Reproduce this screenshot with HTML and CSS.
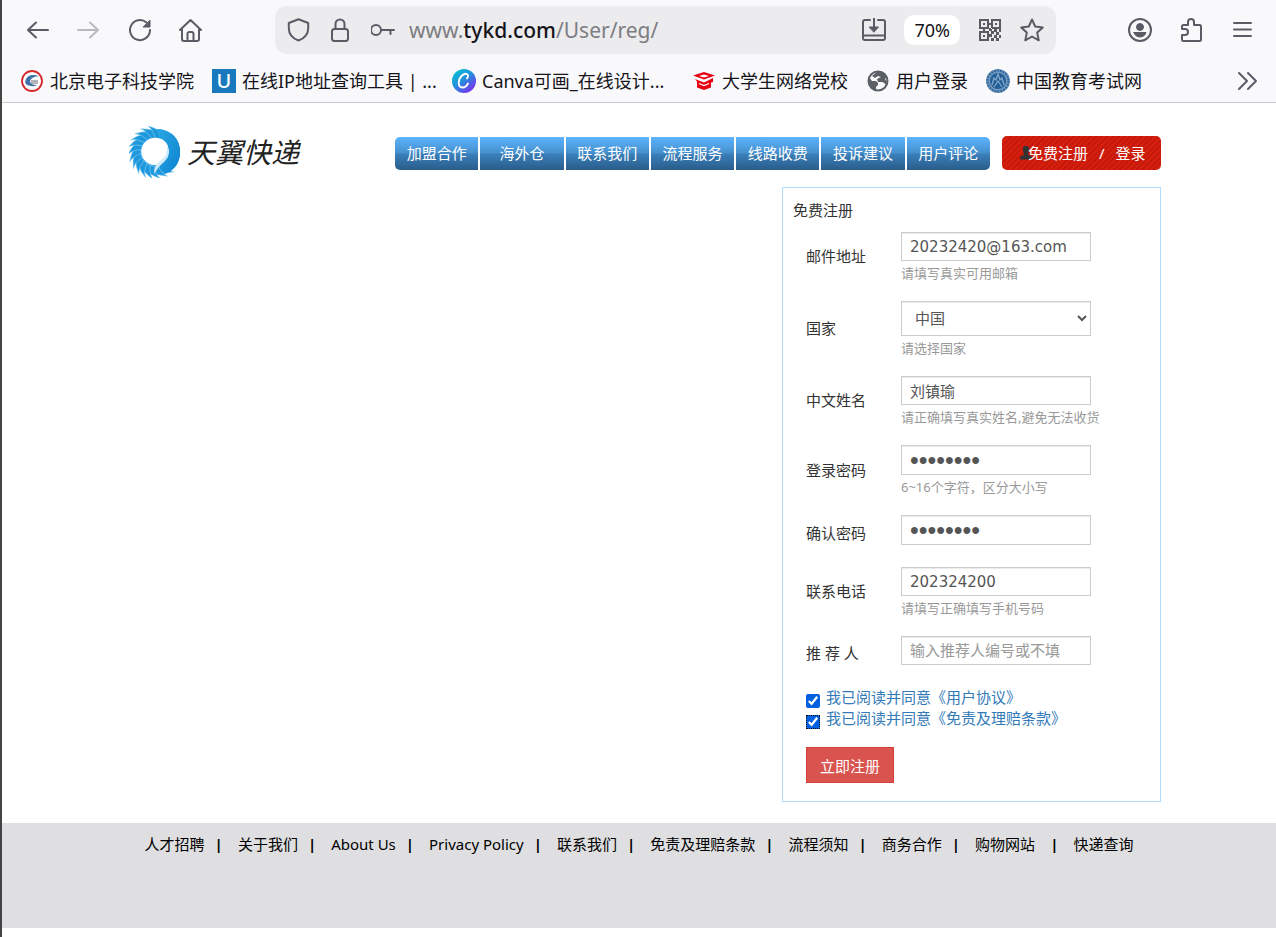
FILE: index.html
```html
<!DOCTYPE html>
<html lang="zh-CN">
<head>
  <meta charset="UTF-8" />
  <meta name="viewport" content="width=device-width, initial-scale=1.0"/>
  <title>天翼快递 - 免费注册</title>
  <link rel="stylesheet" href="styles.css">
</head>
<body>
  <div class="browser">
    <div class="toolbar">
      <div class="tool-group">
        <button class="tool" aria-label="后退"><svg viewBox="0 0 24 24"><path d="M22 12H2M10 4.500L2 12l8 7.500"/></svg></button>
        <button class="tool off" aria-label="前进"><svg viewBox="0 0 24 24"><path d="M1 12h20M13 4.500l8 7.500-8 7.500"/></svg></button>
        <button class="tool" aria-label="刷新"><svg viewBox="0 0 24 24"><path d="M18.500 4.500A10 10 0 1 0 22 12"/><path class="solid thin" d="M22 2.500v6.500h-6.500z"/></svg></button>
        <button class="tool" aria-label="主页"><svg viewBox="0 0 24 24"><path d="M1 12L11.500 2 22 12M3 11v10q0 2 2 2h13q2 0 2-2V11M8.500 22v-6q0-2 2-2h2q2 0 2 2v6"/></svg></button>
      </div>
      <div class="urlbar">
        <svg class="icon" viewBox="0 0 24 24"><path d="M11.500 1.300L1.800 5v5c0 6 4 10.500 9.700 12.500 5.700-2 9.700-6.500 9.700-12.500V5z"/></svg>
        <svg class="icon" viewBox="0 0 24 24"><rect x="3" y="11" width="16" height="12" rx="2.500"/><path d="M6.500 11V6a4.500 4.500 0 0 1 9 0v5"/></svg>
        <svg class="icon" viewBox="0 0 24 24"><circle cx="5" cy="12" r="5"/><path d="M10 12h13M19.500 12v4"/></svg>
        <div class="url">www.<b>tykd.com</b>/User/reg/</div>
        <svg class="icon" viewBox="0 0 24 24"><path d="M8 2H3Q1 2 1 4v16q0 2 2 2h18q2 0 2-2V4q0-2-2-2h-5M1 17.500h22M12 0v12"/><path class="solid thin" d="M7.500 9h9L12 14z"/></svg>
        <button class="zoom">70%</button>
        <svg class="icon qr" viewBox="0 0 24 24"><path class="solid" d="M1 1h10v10H1zM3 3v6h6V3zM5 5h2v2H5zM13 1h10v10H13zM15 3v6h6V3zM17 5h2v2h-2zM1 13h10v10H1zM3 15v6h6v-6zM5 17h2v2H5zM11 5h2v2h-2zM5 11h2v2H5zM11 10h3v3h-3zM16 11h3v3h-3zM21 11h2v3h-2zM13 13h3v3h-3zM18 14h3v3h-3zM11 16h3v3h-3zM16 17h3v3h-3zM21 17h2v3h-2zM13 20h3v3h-3zM18 20h3v3h-3z"/></svg>
        <svg class="icon" viewBox="0 0 24 24"><path d="M12 1.500l3.200 7 7.600.9-5.600 5.200 1.500 7.700-6.700-3.800-6.700 3.800 1.500-7.700L1.200 9.400l7.600-.9z"/></svg>
      </div>
      <div class="tool-group">
        <button class="tool" aria-label="账户"><svg viewBox="0 0 24 24"><circle cx="12" cy="12" r="11"/><circle class="solid thin" cx="12" cy="9" r="3.500"/><path class="solid thin" d="M6 14.500h12q-1.500 4.500-6 4.500t-6-4.500z"/></svg></button>
        <button class="tool" aria-label="扩展"><svg viewBox="0 0 24 24"><path d="M3 11V8.500Q3 7 4.500 7H9V4a3 3 0 0 1 6 0v3h5.500Q22 7 22 8.500v13q0 1.500-1.500 1.500h-16Q3 23 3 21.500V17h3a3 3 0 0 0 0-6z"/></svg></button>
        <button class="tool" aria-label="菜单"><svg viewBox="0 0 24 24"><path d="M4 5h17M4 11.500h17M4 18h17"/></svg></button>
      </div>
    </div>

    <nav class="bookmarks">
      <a href="#">
        <svg viewBox="0 0 24 24"><circle cx="12" cy="12" r="10" fill="#fff" stroke="#d42a2f" stroke-width="1.800"/><path d="M19 7Q9 4 6 10t5 7q3 1 6-1-7 0-7-4 1-4 9-5z" fill="#3f73a8"/><path d="M11 12h7M11 14h7" stroke="#667" stroke-width="1"/></svg>
        <span>北京电子科技学院</span>
      </a>
      <a href="#" class="cut">
        <i class="u-icon">U</i>
        <span>在线IP地址查询工具 | ...</span>
      </a>
      <a href="#" class="cut">
        <svg viewBox="0 0 24 24"><defs><linearGradient id="canva" x1="0" y1="0" x2=".8" y2="1"><stop offset="0" stop-color="#0cc"/><stop offset=".5" stop-color="#2390dc"/><stop offset="1" stop-color="#8128f0"/></linearGradient></defs><circle cx="12" cy="12" r="12" fill="url(#canva)"/><path d="M15 9.500c3-4-1-6.500-5-3s-5 12 .5 12q3.500 0 5.500-4" fill="none" stroke="#fff" stroke-width="1.800" stroke-linecap="round"/></svg>
        <span>Canva可画_在线设计...</span>
      </a>
      <a href="#">
        <svg viewBox="0 0 24 24"><path d="M1 6.500L12 3l11 3.500-11 4z" fill="#e60012"/><path d="M7 7l5-1.500L17 7l-5 1.500z" fill="#fff"/><path d="M3 10l9 3.500L21 9v4l-2 .5v5L12 21l-7-2.500v-6z" fill="#e60012"/><path d="M7 14.500l5 2 5-2" fill="none" stroke="#fff" stroke-width="1.200"/></svg>
        <span>大学生网络党校</span>
      </a>
      <a href="#">
        <svg viewBox="0 0 24 24"><circle cx="12" cy="12" r="9.500" fill="#f9f9fb" stroke="#5b5f66" stroke-width="2"/><path d="M3 8l3 4h4l2 2v2l-2 2v3q-7-2-7-9zM12 2q7 0 9 6l-2 2 2 3-1 3q-2-3-4-3h-4l-1-3 4-2-3-1-3 2-3-2z" fill="#5b5f66"/></svg>
        <span>用户登录</span>
      </a>
      <a href="#">
        <svg viewBox="0 0 24 24"><circle cx="12" cy="12" r="12" fill="#7299bf"/><circle cx="12" cy="12" r="10.500" fill="none" stroke="#2f679c" stroke-width="2" stroke-dasharray="2 1"/><circle cx="12" cy="12" r="8" fill="#245f98"/><path d="M6 16l2-7 2 2 2-6 2 6 2-2 2 7M8 18l4-6 4 6" fill="none" stroke="#86abcd" stroke-width="1.200"/></svg>
        <span>中国教育考试网</span>
      </a>
      <button class="tool more" aria-label="更多书签"><svg viewBox="0 0 24 24"><path d="M4 4l8 8-8 8M13 4l8 8-8 8"/></svg></button>
    </nav>
  </div>

  <div class="container">
    <header>
      <a href="#" class="logo">
        <svg viewBox="0 0 52 52">
          <defs>
            <linearGradient id="ring" x1="0" y1="0" x2="1" y2="1"><stop offset="0" stop-color="#2ba6e4"/><stop offset="1" stop-color="#0b83d0"/></linearGradient>
            <path id="feather" d="M37 12Q31 3 15 1q6 3 9 11z"/>
          </defs>
          <path fill="url(#ring)" fill-rule="evenodd" d="M28 3a23 23 0 1 0 .1 0zM26 11a14 14 0 1 1-.1 0z"/>
          <g fill="#1d98dd" stroke="#9bd6f4" stroke-width=".5">
            <use href="#feather" transform="rotate(-200 26 26)"/>
            <use href="#feather" transform="rotate(-184 26 26)"/>
            <use href="#feather" transform="rotate(-168 26 26)"/>
            <use href="#feather" transform="rotate(-152 26 26)"/>
            <use href="#feather" transform="rotate(-136 26 26)"/>
            <use href="#feather" transform="rotate(-120 26 26)"/>
            <use href="#feather" transform="rotate(-104 26 26)"/>
            <use href="#feather" transform="rotate(-88 26 26)"/>
            <use href="#feather" transform="rotate(-72 26 26)"/>
            <use href="#feather" transform="rotate(-56 26 26)"/>
            <use href="#feather" transform="rotate(-40 26 26)"/>
            <use href="#feather" transform="rotate(-24 26 26)"/>
            <use href="#feather" transform="rotate(-8 26 26)"/>
            <use href="#feather" transform="rotate(8 26 26)"/>
          </g>
          <path fill="url(#ring)" d="M29 3q22 3 22 23 0 16-15 22l-6-9q10-4 10-14 0-10-9-13-3-4-2-9z"/>
          <circle cx="26" cy="25" r="13" fill="#fff"/>
          <path fill="#cfebfa" d="M38 19q5 10-3 17-5 4-10 12 0-9 6-13 8-5 7-16z"/>
        </svg>
        <span>天翼快递</span>
      </a>
      <nav class="menu">
        <a href="#">加盟合作</a>
        <a href="#">海外仓</a>
        <a href="#">联系我们</a>
        <a href="#">流程服务</a>
        <a href="#">线路收费</a>
        <a href="#">投诉建议</a>
        <a href="#">用户评论</a>
      </nav>
      <div class="account">
        <svg viewBox="0 0 12 14"><path d="M6 0C3 0 2.500 2 3 4.500 3.300 6.500 4 7 4 8.500L0 11v2.500h12V11L8 8.500C8 7 8.700 6.500 9 4.500 9.500 2 9 0 6 0z"/></svg>
        <a href="#">免费注册</a><span>/</span><a href="#">登录</a>
      </div>
    </header>

    <main>
      <form class="register">
        <h2>免费注册</h2>
        <div class="row">
          <label for="email">邮件地址</label>
          <div class="field">
            <input type="text" id="email" value="20232420@163.com">
            <p>请填写真实可用邮箱</p>
          </div>
        </div>
        <div class="row">
          <label for="country">国家</label>
          <div class="field">
            <select id="country"><option>中国</option></select>
            <p>请选择国家</p>
          </div>
        </div>
        <div class="row">
          <label for="name">中文姓名</label>
          <div class="field">
            <input type="text" id="name" value="刘镇瑜">
            <p>请正确填写真实姓名,避免无法收货</p>
          </div>
        </div>
        <div class="row">
          <label for="password">登录密码</label>
          <div class="field">
            <input type="password" id="password" value="12345678">
            <p>6~16个字符，区分大小写</p>
          </div>
        </div>
        <div class="row plain">
          <label for="confirm">确认密码</label>
          <div class="field">
            <input type="password" id="confirm" value="12345678">
          </div>
        </div>
        <div class="row">
          <label for="phone">联系电话</label>
          <div class="field">
            <input type="text" id="phone" value="202324200">
            <p>请填写正确填写手机号码</p>
          </div>
        </div>
        <div class="row plain">
          <label for="referrer">推 荐 人</label>
          <div class="field">
            <input type="text" id="referrer" placeholder="输入推荐人编号或不填">
          </div>
        </div>
        <div class="agree">
          <input type="checkbox" id="terms" aria-label="用户协议" checked>
          <a href="#">我已阅读并同意《用户协议》</a>
        </div>
        <div class="agree">
          <input type="checkbox" id="claims" class="focused" aria-label="免责及理赔条款" checked>
          <a href="#">我已阅读并同意《免责及理赔条款》</a>
        </div>
        <button type="submit" class="submit">立即注册</button>
      </form>
    </main>
  </div>

  <footer>
    <a href="#">人才招聘</a>
    <a href="#">关于我们</a>
    <a href="#">About Us</a>
    <a href="#">Privacy Policy</a>
    <a href="#">联系我们</a>
    <a href="#">免责及理赔条款</a>
    <a href="#">流程须知</a>
    <a href="#">商务合作</a>
    <a href="#" class="wide">购物网站</a>
    <a href="#">快递查询</a>
  </footer>
</body>
</html>
```
FILE: styles.css
```css
* {
  box-sizing: border-box;
}
body {
  margin: 0;
  min-height: 100vh;
  border-left: 2px solid #444;
  background-color: #fff;
  color: #333;
  font-family: "Noto Sans", "Noto Sans CJK SC", sans-serif;
  font-size: 15px;
  line-height: 21px;
}
a {
  text-decoration: none;
}
button, input, select {
  font-family: inherit;
}
svg {
  display: block;
  flex: none;
}

/* browser bars */
.browser {
  background-color: #f9f9fb;
  border-bottom: 1px solid #ccc;
}
.toolbar {
  display: flex;
  align-items: center;
  padding: 6px 22px 6px 24px;
}
.tool-group {
  display: flex;
  gap: 27px;
}
.tool {
  width: 24px;
  height: 24px;
  padding: 0;
  border: none;
  background: none;
}
.tool svg, .icon {
  width: 24px;
  height: 24px;
  fill: none;
  stroke: #5b5b66;
  stroke-width: 2;
  stroke-linecap: round;
  stroke-linejoin: round;
}
.tool .solid, .icon .solid {
  fill: #5b5b66;
}
.thin {
  stroke-width: 1;
}
.tool.off {
  opacity: 0.4;
}
.urlbar {
  flex: 1;
  display: flex;
  align-items: center;
  gap: 18px;
  height: 48px;
  margin: 0 72px 0 72px;
  padding: 0 12px;
  border-radius: 12px;
  background-color: #ececee;
}
.url {
  flex: 1;
  margin-left: -4px;
  font-size: 21px;
  line-height: 30px;
  color: #7d7d82;
}
.url b {
  font-weight: 500;
  color: #15141a;
}
.zoom {
  height: 30px;
  padding: 0 10px;
  border: none;
  border-radius: 10px;
  background-color: #fff;
  color: #15141a;
  font-size: 18px;
}
.icon.qr .solid {
  stroke: none;
  fill-rule: evenodd;
}
.bookmarks {
  display: flex;
  align-items: center;
  gap: 18px;
  height: 42px;
  padding: 0 17px 0 18px;
}
.bookmarks a {
  display: flex;
  align-items: center;
  gap: 6px;
  color: #15141a;
  font-size: 18px;
  line-height: 24px;
  white-space: nowrap;
}
.bookmarks a svg, .u-icon {
  width: 24px;
  height: 24px;
}
.bookmarks .cut {
  width: 222px;
}
.u-icon {
  flex: none;
  background-color: #1a78bd;
  color: #fff;
  font-size: 20px;
  font-style: normal;
  font-weight: 500;
  text-align: center;
}
.more {
  margin-left: auto;
}

/* site header */
.container {
  max-width: 1044px;
  margin: 0 auto;
  padding-left: 12px;
}
header {
  display: flex;
  align-items: center;
  height: 84px;
  padding-top: 12px;
}
.logo {
  display: flex;
  align-items: center;
  gap: 6px;
  color: #222;
  font-size: 28px;
  font-style: italic;
  line-height: 52px;
  white-space: nowrap;
}
.logo svg {
  width: 52px;
  height: 52px;
}
.menu {
  display: grid;
  grid-template-columns: repeat(7, 1fr);
  gap: 2px;
  width: 595px;
  margin-left: auto;
  border-radius: 5px;
  overflow: hidden;
}
.menu a {
  color: #fff;
  line-height: 33px;
  text-align: center;
  background: linear-gradient(#5db4fc, #458fcd 49%, #3b80bb 51%, #295c8a);
}
.account {
  display: flex;
  align-items: center;
  width: 159px;
  margin-left: 12px;
  padding-left: 18px;
  border-radius: 5px;
  color: #fff;
  line-height: 34px;
  background: repeating-linear-gradient(135deg, #d81e0c 0 2px, #c41a0c 2px 4px);
}
.account svg {
  width: 12px;
  height: 14px;
  margin-right: -4px;
  fill: #333;
}
.account span {
  margin: 0 11px;
}
.account a {
  color: #fff;
}
.menu, .account {
  margin-top: 4px;
}
header .logo {
  margin-top: 2px;
}

/* register form */
.register {
  width: 379px;
  margin-left: auto;
  padding: 12px 10px 18px 23px;
  border: 1px solid #b3ddff;
}
.register h2 {
  margin: 0 0 11px -13px;
  font-size: 15px;
  font-weight: normal;
}
.row {
  display: grid;
  grid-template-columns: 95px 1fr;
  align-items: center;
  margin-bottom: 20px;
}
.row.plain {
  margin-bottom: 22px;
}
.plain label {
  padding-top: 6px;
}
.field input, .field select {
  display: block;
  width: 190px;
  height: 29px;
  padding: 0 8px;
  border: 1px solid #ccc;
  border-radius: 0;
  background-color: #fff;
  box-shadow: inset 0 1px 1px rgba(0,0,0,0.08);
  color: #555;
  font-family: "DejaVu Sans", "Noto Sans CJK SC", sans-serif;
  font-size: 15px;
}
.field input[type="password"] {
  height: 30px;
  font-family: "Liberation Sans", sans-serif;
  font-size: 25px;
}
.field select {
  height: 35px;
  padding: 0 9px;
}
.field input::placeholder {
  color: #999;
}
.field p {
  margin: 5px 0 0;
  color: #999;
  font-size: 13px;
  line-height: 15px;
  white-space: nowrap;
}
.agree {
  display: flex;
  align-items: center;
  gap: 6px;
}
.agree input {
  width: 14px;
  height: 14px;
  margin: 6px 0 0;
  accent-color: #0060df;
}
.agree .focused {
  outline: 1px dotted #15141a;
  outline-offset: -1px;
}
.agree a {
  color: #337ab7;
}
.submit {
  height: 36px;
  margin-top: 18px;
  padding: 0 13px;
  border: 1px solid #d43f3a;
  background-color: #d9534f;
  color: #fff;
  font-size: 15px;
}

footer {
  display: flex;
  justify-content: center;
  height: 105px;
  margin-top: 21px;
  padding-top: 11px;
  background-color: #dfdfe1;
  white-space: nowrap;
}
footer a {
  color: #000;
}
footer a:not(:last-child)::after {
  content: "|";
  margin: 0 15px 0 10px;
  font-weight: bold;
}
footer .wide:not(:last-child)::after {
  margin-left: 15px;
}
```
